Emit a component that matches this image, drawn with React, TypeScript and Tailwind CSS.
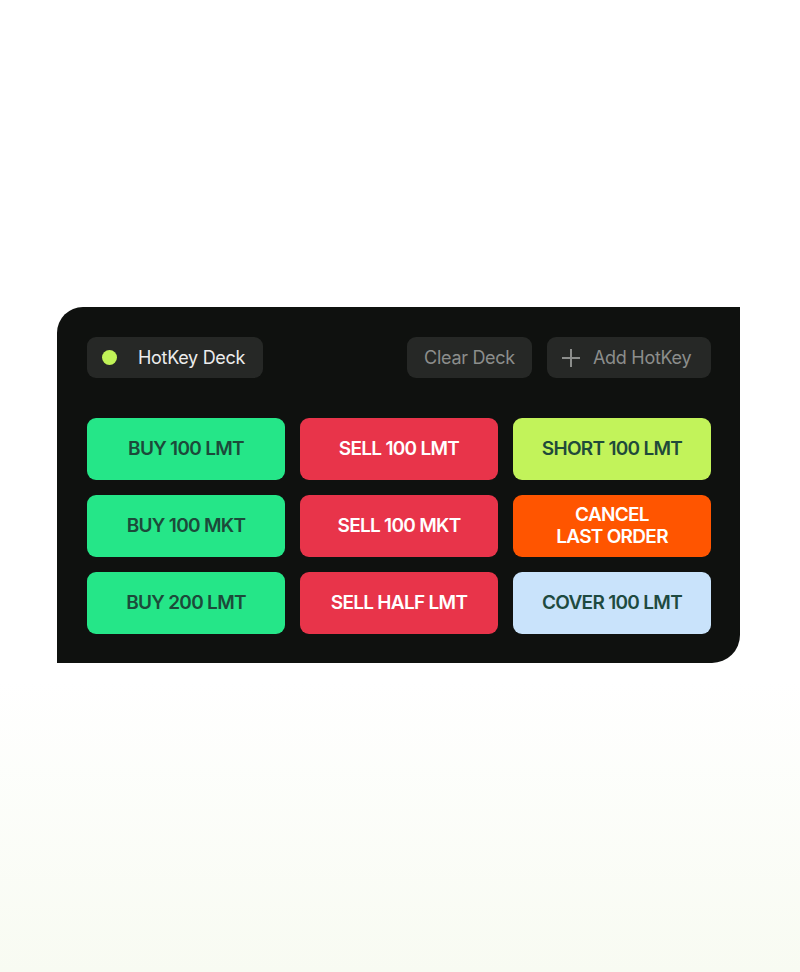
import React from "react";

const font = { fontFamily: "Inter, 'Liberation Sans', sans-serif" };

type Key = { label: React.ReactNode; cls: string };

const keys: Key[] = [
  { label: "BUY 100 LMT", cls: "bg-[#25e688] text-[#1c4a3a]" },
  { label: "SELL 100 LMT", cls: "bg-[#e8344a] text-white" },
  { label: "SHORT 100 LMT", cls: "bg-[#c2f35a] text-[#1f4a3a]" },
  { label: "BUY 100 MKT", cls: "bg-[#25e688] text-[#1c4a3a]" },
  { label: "SELL 100 MKT", cls: "bg-[#e8344a] text-white" },
  {
    label: (
      <>
        CANCEL
        <br />
        LAST ORDER
      </>
    ),
    cls: "bg-[#ff5500] text-white",
  },
  { label: "BUY 200 LMT", cls: "bg-[#25e688] text-[#1c4a3a]" },
  { label: "SELL HALF LMT", cls: "bg-[#e8344a] text-white" },
  { label: "COVER 100 LMT", cls: "bg-[#c9e3fb] text-[#1e4a40]" },
];

export default function App() {
  return (
    <div
      className="w-[800px] h-[972px] bg-gradient-to-b from-white from-[70%] to-[#f8fbf2] pt-[307px] pl-[57px]"
      style={font}
    >
      <div className="w-[683px] h-[356px] bg-[#0f110f] rounded-tl-[26px] rounded-br-[28px] p-[30px] pr-[29px] flex flex-col gap-[40px]">
        <div className="flex items-center h-[41px]">
          <div className="h-[41px] w-[176px] rounded-[9px] bg-[#262826] flex items-center pl-[15px]">
            <span className="w-[15px] h-[15px] rounded-full bg-[#c0f257]" />
            <span className="ml-[21px] text-[18px] text-[#ececec] tracking-[-0.3px]">HotKey Deck</span>
          </div>
          <div className="ml-auto flex gap-[15px]">
            <div className="h-[41px] w-[125px] rounded-[9px] bg-[#262826] flex items-center justify-center text-[18px] text-[#8c8e8c] tracking-[-0.3px]">
              Clear Deck
            </div>
            <div className="h-[41px] w-[164px] rounded-[9px] bg-[#262826] flex items-center pl-[14px] text-[18px] text-[#8c8e8c] tracking-[-0.3px]">
              <svg width="20" height="20" viewBox="0 0 20 20" fill="none" stroke="#8c8e8c" strokeWidth="2">
                <path d="M10 1v18M1 10h18" />
              </svg>
              <span className="ml-[12px]">Add HotKey</span>
            </div>
          </div>
        </div>
        <div className="grid grid-cols-3 gap-x-[15px] gap-y-[15px]">
          {keys.map((k, i) => (
            <div
              key={i}
              className={`h-[62px] rounded-[9px] flex items-center justify-center text-center text-[19px] leading-[22px] font-semibold tracking-[-0.7px] ${k.cls}`}
            >
              <span>{k.label}</span>
            </div>
          ))}
        </div>
      </div>
    </div>
  );
}
